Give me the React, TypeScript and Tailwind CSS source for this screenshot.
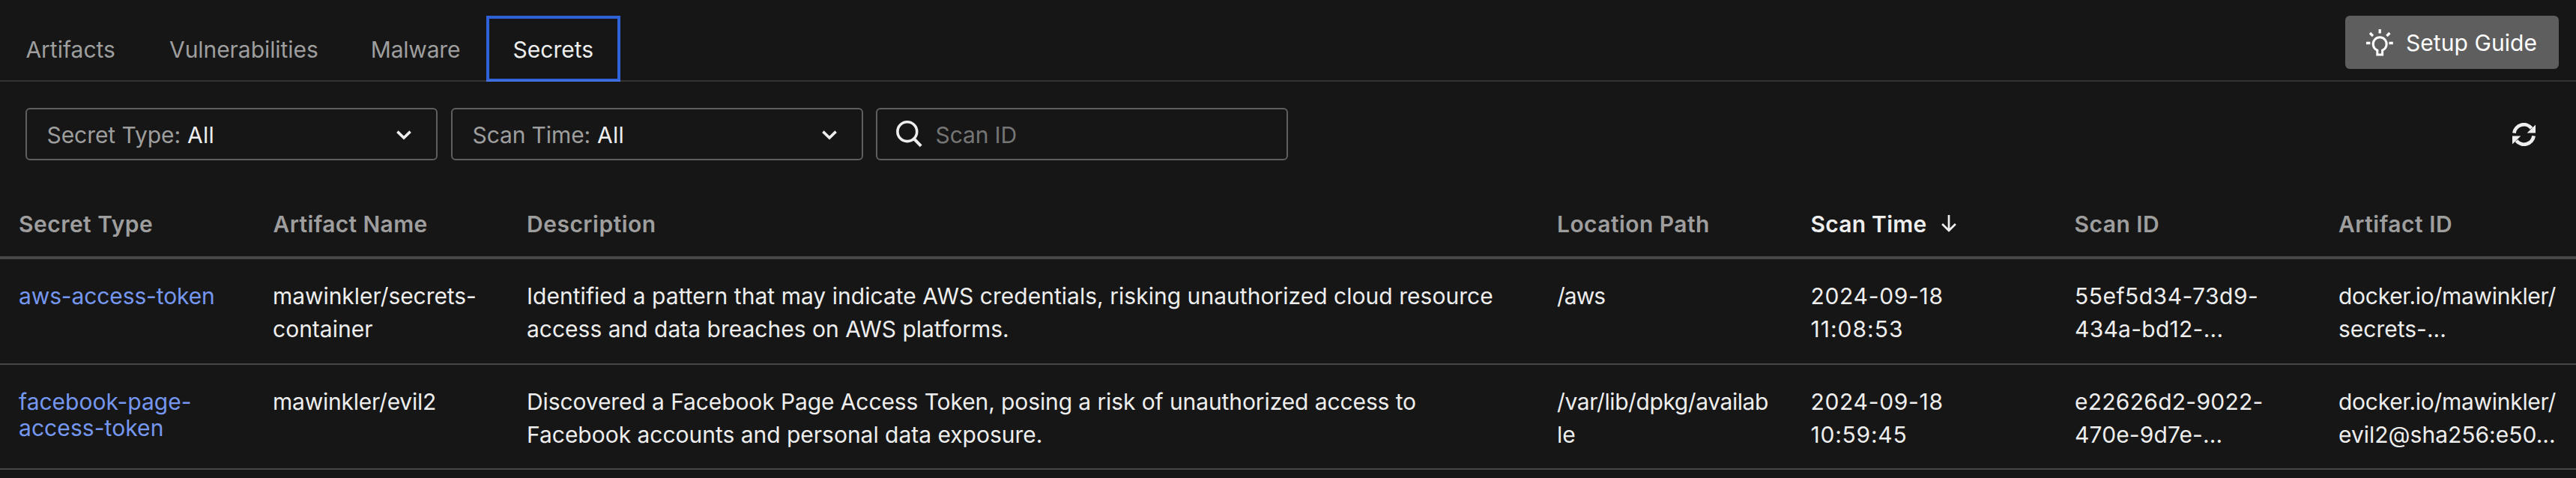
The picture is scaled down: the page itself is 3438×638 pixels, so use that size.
import type { ReactNode } from 'react';

function BulbIcon() {
  return (
    <svg width="36" height="36" viewBox="0 0 36 36" fill="none" stroke="#fff" strokeWidth="3.3">
      <path d="M14.8 34.1V28.1A9 9 0 1 1 21.6 28.1V34.1Z" strokeWidth="3" />
      <path d="M18.2 0V5.4M0 18.5H5.4M30.4 18.5H35.8M5 5L9 9M31.4 5L27.4 9" />
    </svg>
  );
}

function RefreshIcon() {
  return (
    <svg width="31" height="31" viewBox="0 0 31 31" fill="#eee">
      <g fill="none" stroke="#eee" strokeWidth="4.8">
        <path d="M2.4 13.6A13.1 13.1 0 0 1 25.6 7.2" />
        <path d="M28.6 17.4A13.1 13.1 0 0 1 5.4 23.8" />
      </g>
      <path d="M31 2.6V13.6H19.6Z" />
      <path d="M0 28.4V17.4H11.4Z" />
    </svg>
  );
}

function SearchIcon() {
  return (
    <svg width="36" height="36" viewBox="0 0 36 36" fill="none" stroke="#eee">
      <circle cx="14.8" cy="14.7" r="12.9" strokeWidth="3.6" />
      <path d="M23.6 24L33.2 33.8" strokeWidth="4" />
    </svg>
  );
}

function Chevron() {
  return (
    <svg width="20" height="13" viewBox="0 0 20 13" fill="none" stroke="#eee" strokeWidth="3.6">
      <path d="M1.4 1.6L10 10L18.6 1.6" />
    </svg>
  );
}

function SortArrow() {
  return (
    <svg width="20" height="23" viewBox="0 0 20 23" fill="none" stroke="#eee" strokeWidth="2.7">
      <path d="M10 0V20.5M1.1 12L10 20.8L18.9 12" />
    </svg>
  );
}

function Select({ label, labelClass, className }: { label: string; labelClass: string; className: string }) {
  return (
    <button className={`flex h-[70px] w-[550px] items-center rounded-md border-2 border-[#5e5e5e] pr-[33px] text-left ${className}`}>
      <span className={`mt-[2px] text-[#9e9e9e] ${labelClass}`}>{label}</span>
      <span className="mt-[2px] ml-[9px] grow tracking-[0.25px]">All</span>
      <span className="mt-[2px]">
        <Chevron />
      </span>
    </button>
  );
}

const GRID = 'grid grid-cols-[338.5px_339px_1375px_338.5px_352.5px_352px_1fr] items-start';

function Row({ link, cells, className }: { link: ReactNode; cells: ReactNode[]; className: string }) {
  return (
    <div className={`${GRID} border-b-2 border-[#464646] pt-[27px] ${className}`}>
      <a className="mt-[5px] pl-[25px] leading-[35px] text-[#7597f0]">{link}</a>
      {cells.map((c, i) => (
        <div key={i} className="whitespace-nowrap pl-[25.5px]">
          {c}
        </div>
      ))}
    </div>
  );
}

export default function App() {
  return (
    <div className="h-[638px] w-full overflow-hidden bg-[#161616] font-['Inter','Liberation_Sans',sans-serif] text-[30px] leading-[44px] font-normal whitespace-nowrap text-[#eee]">
      <header className="flex h-[109px] items-start justify-between border-b-2 border-[#333] pt-[21px] pr-[23px]">
        <nav className="flex h-[88px] text-[#9e9e9e]">
          <a className="w-[190px] pt-[23px] pl-[34.4px]">Artifacts</a>
          <a className="w-[270px] pt-[23px] pl-[36px] tracking-[-0.06px]">Vulnerabilities</a>
          <a className="w-[189px] pt-[23px] pl-[34.8px] tracking-[-0.22px]">Malware</a>
          <a className="w-[179px] border-b-2 border-[#4573e2] text-[#eee]">
            <span className="block h-[86px] border-x-4 border-t-4 border-b-2 border-[#2f61d9] pt-[19px] pl-[31.5px]">Secrets</span>
          </a>
        </nav>
        <button className="flex h-[71px] w-[285px] rounded-md bg-[#5e5e5e] pt-[14px] pl-[27.5px] text-white">
          <span className="mt-[3.5px] mr-[17.5px] h-[36px]">
            <BulbIcon />
          </span>
          <span className="tracking-[0.06px]">Setup Guide</span>
        </button>
      </header>

      <section className="flex h-[105px] items-start pt-[35px] pr-[54px] pl-[34px]">
        <Select label="Secret Type:" className="mr-[18px] pl-[26.5px]" labelClass="tracking-[-0.06px]" />
        <Select label="Scan Time:" className="mr-[17px] pl-[26.5px]" labelClass="tracking-[-0.12px]" />
        <div className="flex h-[70px] w-[550px] items-center rounded-md border-2 border-[#5e5e5e] pl-[24.5px]">
          <SearchIcon />
          <span className="mt-[2px] ml-[17px] tracking-[-0.12px] text-[#757575]">Scan ID</span>
        </div>
        <button className="mt-[20px] ml-auto h-[31px]">
          <RefreshIcon />
        </button>
      </section>

      <div className={`${GRID} h-[132px] border-b-4 border-[#464646] pt-[63px] font-semibold text-[#9e9e9e]`}>
        <div className="pl-[25px] tracking-[0.48px]">Secret Type</div>
        <div className="pl-[26px] tracking-[0.36px]">Artifact Name</div>
        <div className="pl-[25.5px] tracking-[0.5px]">Description</div>
        <div className="pl-[25.5px] tracking-[0.43px]">Location Path</div>
        <div className="flex pl-[25.5px] text-[#eee]">
          <span className="tracking-[0.24px]">Scan Time</span>
          <span className="mt-[10px] ml-[19px] h-[23px]">
            <SortArrow />
          </span>
        </div>
        <div className="pl-[25px] tracking-[0.48px]">Scan ID</div>
        <div className="pl-[25.5px] tracking-[0.5px]">Artifact ID</div>
      </div>

      <Row
        className="h-[141px]"
        link={<span className="tracking-[-0.12px]">aws-access-token</span>}
        cells={[
          <>
            <span className="tracking-[-0.06px]">mawinkler/secrets-</span>
            <br />
            container
          </>,
          <>
            <span className="tracking-[0.03px]">
              Identified a pattern that may indicate AWS credentials, risking unauthorized cloud resource
            </span>
            <br />
            <span>access and data breaches on AWS platforms.</span>
          </>,
          <span className="tracking-[-1px]">/aws</span>,
          <>
            <span className="tracking-[0.69px]">2024-09-18</span>
            <br />
            <span className="tracking-[1px]">11:08:53</span>
          </>,
          <>
            <span className="tracking-[0.49px]">55ef5d34-73d9-</span>
            <br />
            <span className="tracking-[0.27px]">434a-bd12-...</span>
          </>,
          <>
            <span className="tracking-[-0.29px]">docker.io/mawinkler/</span>
            <br />
            secrets-...
          </>,
        ]}
      />
      <Row
        className="h-[140px]"
        link={
          <>
            facebook-page-
            <br />
            <span className="tracking-[0.07px]">access-token</span>
          </>
        }
        cells={[
          <span className="tracking-[-0.23px]">mawinkler/evil2</span>,
          <>
            <span className="tracking-[-0.1px]">
              Discovered a Facebook Page Access Token, posing a risk of unauthorized access to
            </span>
            <br />
            <span className="tracking-[-0.02px]">Facebook accounts and personal data exposure.</span>
          </>,
          <>
            <span className="tracking-[-0.41px]">/var/lib/dpkg/availab</span>
            <br />
            le
          </>,
          <>
            <span className="tracking-[0.69px]">2024-09-18</span>
            <br />
            <span className="tracking-[0.77px]">10:59:45</span>
          </>,
          <>
            <span className="tracking-[0.26px]">e22626d2-9022-</span>
            <br />
            <span className="tracking-[0.12px]">470e-9d7e-...</span>
          </>,
          <>
            <span className="tracking-[-0.29px]">docker.io/mawinkler/</span>
            <br />
            evil2@sha256:e50...
          </>,
        ]}
      />
    </div>
  );
}
